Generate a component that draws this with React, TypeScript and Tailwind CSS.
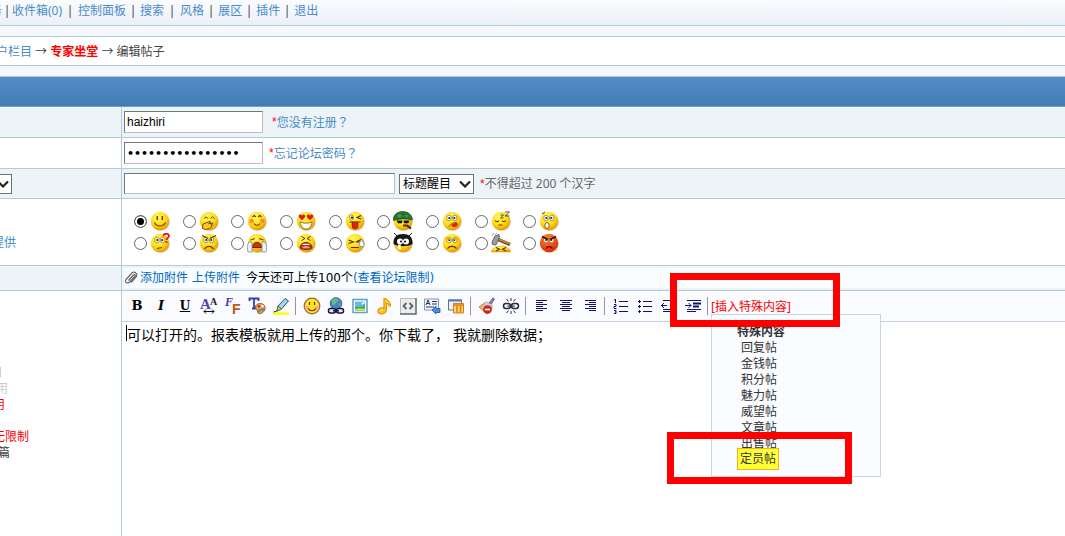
import type { ReactNode } from "react";

const navLinks = [
  { label: "收件箱(0)", gap: "w-4" },
  { label: "控制面板", gap: "w-3.5" },
  { label: "搜索", gap: "w-4" },
  { label: "风格", gap: "w-3.5" },
  { label: "展区", gap: "w-3.5" },
  { label: "插件", gap: "w-3.5" },
];

const specialPosts = ["回复帖", "金钱帖", "积分帖", "魅力帖", "威望帖", "文章帖", "出售帖"];

const link = "text-[#4a8cc7] hover:underline";

function Row({ left, children, className = "" }: { left?: ReactNode; children: ReactNode; className?: string }) {
  return (
    <div className={`flex border-b border-[#b3cad9] ${className}`}>
      <div className="w-[122px] shrink-0 border-r border-[#b3cad9] flex items-center">{left}</div>
      <div className="flex-1 flex items-center pl-0.5">{children}</div>
    </div>
  );
}

function Clipped({ className, children }: { className: string; children: ReactNode }) {
  return <div className={`flex justify-end overflow-hidden whitespace-nowrap ${className}`}>{children}</div>;
}

function Star({ className }: { className: string }) {
  return <span className={`text-[#f00] font-['Liberation_Sans',sans-serif] ${className}`}>*</span>;
}

function Chevron() {
  return (
    <svg className="absolute right-[3px] top-1.5 pointer-events-none" width="12" height="8" viewBox="0 0 12 8">
      <path d="M1 1.5 6 6.5 11 1.5" fill="none" stroke="#222" strokeWidth="2.2" />
    </svg>
  );
}

const inputBox =
  "border border-t-[#707780] border-l-[#707780] border-r-[#b7bec4] border-b-[#b7bec4] bg-white text-black px-0.5 outline-none";

/* ---------- smileys ---------- */

const eyes = (
  <g fill="none" stroke="#5a3200" strokeWidth="1.3">
    <path d="M7.3 5v4M12.3 5v4" />
  </g>
);

const bigEyes = (
  <g>
    <ellipse cx="7" cy="7" rx="2.3" ry="2.8" fill="#fff" stroke="#7a5200" strokeWidth=".6" />
    <ellipse cx="12.7" cy="7" rx="2.3" ry="2.8" fill="#fff" stroke="#7a5200" strokeWidth=".6" />
    <circle cx="7.3" cy="7" r="1.1" fill="#222" />
    <circle cx="12.3" cy="7" r="1.1" fill="#222" />
  </g>
);

const heart = "M0-1.2C-1-3.2-3.6-2.6-3.2-.4-3 1-1 2.2 0 3.2 1 2.2 3 1 3.2-.4 3.6-2.6 1-3.2 0-1.2Z";

const faces: { name: string; art: ReactNode; fill?: string }[] = [
  {
    name: "微笑",
    art: (
      <>
        {eyes}
        <path d="M4.5 11.5c2 4.6 8.6 4.6 11 0" fill="none" stroke="#7a4a00" strokeWidth="1.2" />
      </>
    ),
  },
  {
    name: "偷笑",
    art: (
      <>
        <path d="M5 7.5 7 5.8l2 1.7M11.5 7.5l2-1.7 2 1.7" fill="none" stroke="#6b4100" />
        <path d="M3.5 17.5 4 13l4-1.5 3-1.2.6 1.2-2 1.2 4-.7v1.2l-1.6.7 1 1-2.6 2.6-4 1Z" fill="#ffc928" stroke="#6b3c00" strokeWidth=".9" />
      </>
    ),
  },
  {
    name: "害羞",
    art: (
      <>
        <circle cx="4.7" cy="10" r="2.2" fill="#ff7a38" opacity=".85" />
        <circle cx="15.3" cy="10" r="2.2" fill="#ff7a38" opacity=".85" />
        <path d="M5.5 6 7.2 4.5 9 6M11 6l1.8-1.5L14.5 6M7 12.5c1.5 2.4 4.5 2.4 6 0" fill="none" stroke="#6b3c00" strokeWidth="1.1" />
      </>
    ),
  },
  {
    name: "色",
    art: (
      <>
        <path d={heart} transform="translate(6 6)" fill="#e8160c" />
        <path d={heart} transform="translate(14 6)" fill="#e8160c" />
        <path d="M4 11c3 1.6 9 1.6 12 0-.6 5-3 7-5.5 7C7.5 18 4.5 15.5 4 11Z" fill="#fff" stroke="#8b5200" strokeWidth=".8" />
      </>
    ),
  },
  {
    name: "调皮",
    art: (
      <>
        <ellipse cx="6.5" cy="6.5" rx="2" ry="2.6" fill="#fff" stroke="#7a5200" strokeWidth=".6" />
        <circle cx="7" cy="6.6" r="1.2" fill="#222" />
        <path d="m16 4.5-4 2 4 1.6M4.5 11h11" fill="none" stroke="#5a3200" strokeWidth="1.1" />
        <path d="M7 11.3h6v3.500a3 3 0 0 1-6 0Z" fill="#e02010" stroke="#8a1500" strokeWidth=".7" />
      </>
    ),
  },
  {
    name: "大兵",
    art: (
      <>
        <path d="M.5 9.5C0 4 4 .5 9.5.5c6 0 9.5 3.5 10 8.5-5-1.5-13-1.5-19 .5Z" fill="#247530" stroke="#104818" strokeWidth=".7" />
        <path d="M4 4.5 7 3l2 2-3 2ZM12 3.5l4 1.5-3 1.5Z" fill="#4f9e50" />
        <path d="M3.5 9.500h6l-.6 2.700H5Zm7 0h6l-1.200 2.700H11Z" fill="#111" />
        <path d="M10 14.500h4l4 3" fill="none" stroke="#583010" strokeWidth="2.2" />
      </>
    ),
  },
  {
    name: "馋",
    art: (
      <>
        {bigEyes}
        <path d="M7 15.500c2-3 5-4.500 8-3.500" stroke="#733900" fill="none" />
        <path d="M9.500 13.500c2 0 4-2.500 5.500-1.500 2 2-.5 4.500-3 4-2 0-3-1-2.500-2.500Z" fill="#e6200e" />
      </>
    ),
  },
  {
    name: "睡",
    art: (
      <>
        <path d="M4 9.500c1 1.500 3 1.500 4 0M11 9.500c1 1.500 3 1.500 4 0M7.500 14h4" fill="none" stroke="#6b3c00" strokeWidth="1.1" />
        <path d="M9.500 4h3l-3 3h3M14 1h4.500L14 5h4.500" fill="none" stroke="#444" strokeWidth=".9" />
      </>
    ),
  },
  {
    name: "惊讶",
    art: (
      <>
        {bigEyes}
        <ellipse cx="8" cy="14.5" rx="2.2" ry="3" fill="#fff" stroke="#7a4a00" strokeWidth=".9" />
        <path d="m3 3 3-2" stroke="#333" />
      </>
    ),
  },
  {
    name: "疑问",
    art: (
      <>
        {bigEyes}
        <path d="m7 15.500 5-1" stroke="#6b3c00" strokeWidth="1.2" />
        <path d="M13.500 3c0-3 5.500-3 5.500 0 0 1.800-2.500 2-2.500 4M16.500 8v2" fill="none" stroke="#f0141e" strokeWidth="1.8" />
      </>
    ),
  },
  {
    name: "生气",
    art: (
      <>
        {bigEyes}
        <path d="m3 2.500 6 3M17 2.500l-6 3M5.500 16c2-3.500 7-3.500 9 0" fill="none" stroke="#6b3c00" strokeWidth="1.3" />
      </>
    ),
  },
  {
    name: "大哭",
    art: (
      <>
        <path d="M3.500 7 8 5.500M16.500 7 12 5.500" stroke="#5a3200" />
        <path d="M5.500 14.500c0-7 9-7 9 0Z" fill="#d92a12" stroke="#6b2200" />
        <path d="M2 9c-2 3-2 6-1 10h4V9ZM18 9c2 3 2 6 1 10h-4V9Z" fill="#e9f4ff" stroke="#7b8ba0" strokeWidth=".8" />
      </>
    ),
  },
  {
    name: "抓狂",
    art: (
      <>
        <path d="m5.500 3.500 3.500 2-3.500 2M14.500 3.500l-3.500 2 3.500 2" fill="none" stroke="#5a3200" />
        <path d="M4 15c0-7.500 12-7.500 12 0-2 2-10 2-12 0Z" fill="#b93318" stroke="#6b2200" strokeWidth=".9" />
        <path d="M7 10.800h6l.8 1.200H6.200Z" fill="#fff" />
        <path d="M6 15.200c1-3 7-3 8 0Z" fill="#f09a86" />
      </>
    ),
  },
  {
    name: "流汗",
    art: (
      <>
        <path d="m3.500 7 5 2-5 1.500M16 6.500 11 9h5M6 14.500h8" fill="none" stroke="#5a3200" strokeWidth="1.1" />
        <path d="M16.500 6.500c-2 3-3 5-1.500 6.500 1 1 3.500 1 4-.5.500-2-1-4-2.500-6Z" fill="#f2f8ff" stroke="#66829c" strokeWidth=".8" />
      </>
    ),
  },
  {
    name: "委屈",
    art: (
      <>
        <path d="M.5 11C0 4 4 1 10 1s10 3 9.500 10c-5 3-14 3-19 0Z" fill="#171717" />
        <path d="m1 0 3 3M19 0l-3 3" stroke="#222" />
        <circle cx="7" cy="8.5" r="3" fill="#fff" />
        <circle cx="13" cy="8.5" r="3" fill="#fff" />
        <circle cx="8" cy="8.5" r="1" />
        <circle cx="12" cy="8.5" r="1" />
        <path d="M6.500 11.500v5" stroke="#fff" strokeWidth="2.5" />
      </>
    ),
  },
  {
    name: "难过",
    art: (
      <>
        {bigEyes}
        <path d="M3.500 5.500h5M11.500 5.500h5" stroke="#edb000" strokeWidth="2" />
        <path d="M5.500 15.500c2-3 7-3 9 0" fill="none" stroke="#6b3c00" strokeWidth="1.3" />
      </>
    ),
  },
  { name: "敲打", art: null },
  {
    name: "发怒",
    fill: "url(#rage)",
    art: (
      <>
        {bigEyes}
        <path d="m3 3.500 6 3M17 3.500l-6 3M7 15.500c1.500-2.500 5-2.500 6.500 0" fill="none" stroke="#3c0c00" strokeWidth="1.4" />
      </>
    ),
  },
];

function Smiley({ index }: { index: number }) {
  const face = faces[index];
  if (face.art === null) {
    return (
      <svg width="20" height="20" viewBox="0 0 20 20">
        <path d="M.5 19c1-8 18-8 19 0Z" fill="url(#smile)" stroke="#d79400" strokeWidth=".5" />
        <path d="m5 14.500 3.500 1.800L5 18M15 14.500l-3.500 1.800L15 18" fill="none" stroke="#5a3200" strokeWidth="1.2" />
        <path d="m6 6 13 5.500" stroke="#6b3510" strokeWidth="3.4" />
        <path d="m6 5.700 13 5.300" stroke="#c98340" strokeWidth="1.8" />
        <path d="M1 9 4 3l4-1.500.5 3L5 12l-3.500-.5Z" fill="#9a9da0" stroke="#4d5053" strokeWidth=".8" />
        <path d="m1 3 2-3M4 2 6 0" stroke="#888" strokeWidth=".8" />
      </svg>
    );
  }
  return (
    <svg width="20" height="20" viewBox="0 0 20 20">
      <ellipse cx="10.6" cy="10.8" rx="9.2" ry="9" fill="#b89d78" opacity=".6" />
      <circle cx="10" cy="10" r="9.2" fill={face.fill ?? "url(#smile)"} />
      {face.art}
    </svg>
  );
}

/* ---------- toolbar icons ---------- */

const navy = "#11116b";

function Icon({ children }: { children: ReactNode }) {
  return (
    <svg width="18" height="18" viewBox="0 0 18 18" fill="none">
      {children}
    </svg>
  );
}

const serif = "font-['Liberation_Serif',serif] font-bold";

const tools: { name: string; icon: ReactNode }[][] = [
  [
    { name: "粗体", icon: <span className="font-['DejaVu_Serif',serif] font-bold text-[13px] text-black">B</span> },
    { name: "斜体", icon: <span className="font-['DejaVu_Serif',serif] font-bold italic text-[13px] text-black">I</span> },
    { name: "下划线", icon: <span className="font-['DejaVu_Serif',serif] font-bold underline text-xs text-black">U</span> },
    {
      name: "字体大小",
      icon: (
        <Icon>
          <text x="0" y="12" fontSize="15" fill="#5246ad" className={serif}>A</text>
          <text x="10" y="8" fontSize="10" fill="#222" className={serif}>A</text>
          <path d="M4 14.500h10M6 12.500l-2 2 2 2M12 12.500l2 2-2 2" stroke="#111" />
        </Icon>
      ),
    },
    {
      name: "字体",
      icon: (
        <Icon>
          <text x="1" y="9" fontSize="12" fill="#4438a8" className={`${serif} italic`}>F</text>
          <text x="8" y="17" fontSize="14" fill="#bd571b" className="font-['Liberation_Sans',sans-serif] font-bold">F</text>
        </Icon>
      ),
    },
    {
      name: "字体颜色",
      icon: (
        <Icon>
          <path d="M1.500 4V1.500h9V4M6 2v9M4 11.500h4" stroke="#3040a8" strokeWidth="1.8" />
          <path d="M7.500 10c0-4 8-5 9.300-.5C18 14 14 17 11 16.500c-2-.3-1-2.500-2-3.500-.7-.7-1.500-1.500-1.500-3Z" fill="#e8a05c" stroke="#9a5525" />
          <circle cx="11" cy="9.3" r="1.3" fill="#d62222" />
          <circle cx="14.5" cy="9" r="1.2" fill="#fff" />
          <circle cx="14.5" cy="12.5" r="1.3" fill="#2380d8" />
          <circle cx="11.5" cy="13.5" r="1.2" fill="#28a13b" />
        </Icon>
      ),
    },
    {
      name: "背景色",
      icon: (
        <Icon>
          <path d="M1 16.500h16" stroke="#ffff00" strokeWidth="2.5" />
          <path d="M13 1.500 16.500 4 9.500 12 5 14l1-5Z" fill="#9fd5ee" stroke="#2d5278" />
          <path d="m6 9 3.500 3L5 14Z" fill="#e9de3a" stroke="#5c6a38" />
          <path d="m5 14-3.500 1" stroke="#333" />
        </Icon>
      ),
    },
  ],
  [
    {
      name: "表情",
      icon: (
        <Icon>
          <circle cx="9" cy="9" r="7.8" fill="#ffe620" stroke="#a16d38" strokeWidth="1.2" />
          <circle cx="4" cy="10.5" r="2" fill="#ffa49a" />
          <circle cx="14" cy="10.5" r="2" fill="#ffa49a" />
          <path d="M6.500 5v3M11.500 5v3M5 11.500c2 3 6 3 8 0" stroke="#543000" strokeWidth="1.2" />
        </Icon>
      ),
    },
    {
      name: "链接",
      icon: (
        <Icon>
          <circle cx="9" cy="6.5" r="5.8" fill="#4e82c7" stroke="#465b9c" />
          <path d="M5 3c2-2 6-2 7 0-1 2-2 1-3 3s-2 3-4 1ZM12 7l2-1-1 4Z" fill="#5ec278" />
          <rect x="1.5" y="11.5" width="7" height="4.5" rx="2" fill="#e7e7ff" stroke="#15152f" strokeWidth="1.5" />
          <rect x="9.5" y="11.5" width="7" height="4.5" rx="2" fill="#e7e7ff" stroke="#15152f" strokeWidth="1.5" />
          <path d="M6 13.800h6" stroke="#15152f" strokeWidth="1.5" />
        </Icon>
      ),
    },
    {
      name: "图片",
      icon: (
        <Icon>
          <rect x="2" y="2.5" width="14" height="13" fill="#fff" stroke="#639fc4" strokeWidth="1.5" />
          <path d="M4 4.500h10v9H4Z" fill="#62bcf0" />
          <path d="M4 10.500c3-3 5 2 10-3v6H4Z" fill="#4daa45" />
          <path d="M4 12.500c3-2 6 0 10-1v2H4Z" fill="#cde353" />
          <path d="m11 7 3-2" stroke="#fff" strokeWidth="1.5" />
        </Icon>
      ),
    },
    {
      name: "音乐",
      icon: (
        <Icon>
          <path d="M9 11.500V1.500h1.600c.6 2.500 5.400 2.500 4.900 6.500-.4 1.600-1.600 1.600-1.500 0 0-1.300-1.200-1.500-2.600-1.700V13c-.4 4-6 4.800-8 2.500C2 12.500 5 9.800 9 11.500Z" fill="#ffc826" stroke="#ee9100" strokeWidth="1.2" />
          <path d="M5 14c1-1.500 2-1.500 3-1M10.500 3.500c1 1.500 2.500 1.500 3.500 3" stroke="#fff3a0" />
        </Icon>
      ),
    },
    {
      name: "代码",
      icon: (
        <Icon>
          <path d="M1 1h16v16H1Z" fill="#ececec" />
          <path d="M1.500 17V1.500H17" stroke="#b9b9b9" />
          <path d="M17 1v16H1" stroke="#666" strokeWidth="1.5" />
          <path d="M7.500 6 4.500 9l3 3M10.500 6l3 3-3 3" stroke="#586174" strokeWidth="1.8" />
        </Icon>
      ),
    },
    {
      name: "引用",
      icon: (
        <Icon>
          <path d="M1.500 2h14v11h-14Z" fill="#f4f8ff" stroke="#8296b3" />
          <path d="m3 8 2-5 2 5M4 6.500h2M9 4.500h5M9 7h5M3 10h8" stroke="#263552" />
          <path d="m9 13 4-4v2.500h4v4h-4V17Z" fill="#4e8bdb" stroke="#22539b" strokeWidth=".8" />
        </Icon>
      ),
    },
    {
      name: "表格",
      icon: (
        <Icon>
          <path d="M1.500 3h13v10h-13Z" fill="#edf2fa" stroke="#5c6f99" />
          <path d="M1 3.500h14" stroke="#5378b7" strokeWidth="2" />
          <path d="M6.500 6.500h10v9.500h-10Z" fill="#ffd56f" stroke="#dc7b12" />
          <path d="M6.500 8h10M10 8v8M13.500 8v8" stroke="#e07c13" strokeWidth="1.5" />
        </Icon>
      ),
    },
  ],
  [
    {
      name: "清除格式",
      icon: (
        <Icon>
          <path d="m11 6 4-5 1.500 1L13 7.500Z" fill="#8b93c8" stroke="#555b91" />
          <path d="m8 5 6 3c0 5-2 7-5 9L1 10Z" fill="#e9ba87" stroke="#b68055" />
          <path d="m8 5 6 3-1 2-7-3Z" fill="#c9d0e7" />
          <circle cx="9.5" cy="12.5" r="4.3" fill="#c52b20" />
          <path d="M7 12.500h5" stroke="#fff" strokeWidth="1.6" />
        </Icon>
      ),
    },
    {
      name: "取消链接",
      icon: (
        <Icon>
          <rect x="1.5" y="6.5" width="7" height="5" rx="2.5" stroke="#292940" strokeWidth="1.5" />
          <rect x="9.5" y="6.5" width="7" height="5" rx="2.5" stroke="#292940" strokeWidth="1.5" />
          <path d="M5 9h8M9 1v3M9 14v3M4.500 2l2 2.500M13.500 2l-2 2.500M4.500 16l2-2.500M13.500 16l-2-2.500" stroke="#292940" />
        </Icon>
      ),
    },
  ],
  [
    { name: "左对齐", icon: <Icon><path d="M3 3.500h11M3 5.500h7M3 7.500h11M3 9.500h7M3 11.500h11M3 13.500h7" stroke={navy} /></Icon> },
    { name: "居中", icon: <Icon><path d="M3 3.500h12M5 5.500h8M3 7.500h12M5 9.500h8M3 11.500h12M5 13.500h8" stroke={navy} /></Icon> },
    { name: "右对齐", icon: <Icon><path d="M4 3.500h11M8 5.500h7M4 7.500h11M8 9.500h7M4 11.500h11M8 13.500h7" stroke={navy} /></Icon> },
  ],
  [
    { name: "编号", icon: <Icon><path d="M7 4.500h9M7 9.500h9M7 14.500h9" stroke={navy} /><path d="M2 3.500 3.500 2v4M2 7.500h2v2H2v2h2.500M2 13.500h2v3H2M3 15h1" stroke={navy} /></Icon> },
    { name: "列表", icon: <Icon><path d="M7 4.500h9M7 9.500h9M7 14.500h9M2 4.500h3M2 9.500h3M2 14.500h3M3.500 3v3M3.500 8v3M3.500 13v3" stroke={navy} /></Icon> },
    {
      name: "减少缩进",
      icon: (
        <Icon>
          <path d="M3 3.500h14M3 12.500h14M3 14.500h9M1 8.500h6M4 6 1.500 8.500 4 11" stroke={navy} />
          <path d="M10 6.500h7M10 9.500h4" stroke={navy} strokeWidth="2" />
        </Icon>
      ),
    },
    {
      name: "增加缩进",
      icon: (
        <Icon>
          <path d="M3 3.500h14M3 12.500h14M3 14.500h9M1 8.500h6M4.500 6 7 8.500 4.500 11" stroke={navy} />
          <path d="M9 6.500h8M9 9.500h6" stroke={navy} strokeWidth="2" />
        </Icon>
      ),
    },
  ],
];

function Separator() {
  return <div className="ml-0.5 mr-1 w-px h-[18px] bg-[#93979d]" />;
}

function Toolbar() {
  return (
    <div className="flex items-center h-[31px] pl-[3px] bg-[#f9fbfe] border-b border-[#c3d3e3]">
      {tools.map((group, i) => (
        <div key={i} className="flex items-center">
          {group.map((tool) => (
            <button key={tool.name} aria-label={tool.name} className="size-6 flex items-center justify-center">
              {tool.icon}
            </button>
          ))}
          {i < tools.length - 1 && <Separator />}
        </div>
      ))}
      <Separator />
      <div className="relative -ml-px pt-0.5">
        <button className="block text-[#f00] leading-4 whitespace-nowrap">[插入特殊内容]</button>
        <SpecialMenu />
      </div>
    </div>
  );
}

function SpecialMenu() {
  return (
    <div className="absolute top-[17px] left-0 z-10 w-[170px] border border-[#c9d7e5] bg-[#fafcff] pt-[9px] pb-1.5 pl-[25px] leading-4 text-[#333]">
      <div className="font-bold">特殊内容</div>
      {specialPosts.map((name) => (
        <button key={name} className="block ml-1">
          {name}
        </button>
      ))}
      <button className="relative block -mt-1 px-0.5 py-0.5 border border-[#f5b022] bg-[#ffff33]">定员帖</button>
    </div>
  );
}

export default function App() {
  return (
    <div className="relative min-h-screen flex flex-col overflow-hidden bg-[#f4f8fc] text-xs text-[#444] font-['Noto_Sans','Noto_Sans_CJK_SC',sans-serif]">
      <svg className="absolute size-0">
        <defs>
          <radialGradient id="smile" cx="40%" cy="30%" r="70%">
            <stop offset="0" stopColor="#fff96a" />
            <stop offset=".6" stopColor="#ffdc18" />
            <stop offset="1" stopColor="#e89c00" />
          </radialGradient>
          <radialGradient id="rage" cx="40%" cy="25%" r="75%">
            <stop offset="0" stopColor="#ff8a30" />
            <stop offset="1" stopColor="#e02a08" />
          </radialGradient>
        </defs>
      </svg>

      <nav className="flex items-center h-[26px] pb-1 border-b border-[#b3cad9] bg-linear-to-b from-[#fafcfe] to-[#eaf0f8] whitespace-nowrap">
        <Clipped className="w-0.5">
          <a href="#" className={link}>务</a>
        </Clipped>
        <span className="w-2.5 text-center">|</span>
        {navLinks.map((item) => (
          <div key={item.label} className="flex">
            <a href="#" className={link}>{item.label}</a>
            <span className={`text-center ${item.gap}`}>|</span>
          </div>
        ))}
        <a href="#" className={link}>退出</a>
      </nav>

      <div className="flex items-center mt-2.5 pt-0.5 h-[30px] border-y border-[#b3cad9] bg-white whitespace-pre">
        <Clipped className="w-8">
          <a href="#" className={link}>户栏目</a>
        </Clipped>
        <span> → </span>
        <a href="#" className="font-bold text-[#f00]">专家坐堂</a>
        <span> → 编辑帖子</span>
      </div>

      <form className="mt-2.5 flex-1 flex flex-col" onSubmit={(e) => e.preventDefault()}>
        <div className="h-[31px] border-t border-t-[#b3cad9] border-b border-b-[#6f9fcc] bg-linear-to-b from-[#548ec7] to-[#417db5]" />

        <Row className="h-[31px] bg-[#ecf4f8]">
          <input aria-label="用户名" defaultValue="haizhiri" className={`${inputBox} w-[139px] h-[22px] font-['Liberation_Sans',sans-serif]`} />
          <Star className="ml-[9px]" />
          <a href="#" lang="zh-TW" className={link}>您没有注册<span className="font-['Noto_Sans_CJK_TC',sans-serif]">？</span></a>
        </Row>

        <Row className="h-[31px] bg-white">
          <input aria-label="密码" type="password" defaultValue="1234567890123456" className={`${inputBox} w-[139px] h-[22px] text-[11px] font-bold font-['DejaVu_Sans',sans-serif]`} />
          <Star className="ml-1.5" />
          <a href="#" className={link}>忘记论坛密码<span className="font-['Noto_Sans_CJK_TC',sans-serif]">？</span></a>
        </Row>

        <Row
          className="h-[30px] bg-[#ecf4f8]"
          left={
            <Clipped className="w-3">
              <div className="relative shrink-0">
                <select aria-label="话题" className="block appearance-none w-10 h-5 border border-[#707070] bg-white" />
                <Chevron />
              </div>
            </Clipped>
          }
        >
          <input aria-label="标题" className={`${inputBox} w-[271px] h-[21px]`} />
          <div className="relative ml-1">
            <select aria-label="标题样式" className="block appearance-none w-[75px] h-5 pl-[3px] border border-[#707070] bg-white text-black leading-4">
              <option>标题醒目</option>
            </select>
            <Chevron />
          </div>
          <Star className="ml-1.5" />
          <span className="text-[#666]">不得超过 200 个汉字</span>
        </Row>

        <Row
          className="h-[67px] bg-white"
          left={
            <Clipped className="w-4 pt-[22px]">
              <a href="#" className={link}>提供</a>
            </Clipped>
          }
        >
          <div className="grid grid-cols-9 w-[438px] ml-2.5">
            {faces.map((face, i) => (
              <label key={face.name} className="flex items-center gap-[3px] h-[22px]">
                <input
                  type="radio"
                  name="face"
                  aria-label={face.name}
                  defaultChecked={i === 0}
                  className="appearance-none size-[13px] rounded-full border border-[#666] bg-white checked:bg-black checked:shadow-[inset_0_0_0_2px_#fff]"
                />
                <Smiley index={i} />
              </label>
            ))}
          </div>
        </Row>

        <Row className="h-[25px] bg-[#ecf4f8]">
          <div className="flex-1 flex items-center h-5 bg-[#f9fdff] text-black whitespace-nowrap">
            <svg width="14" height="14" viewBox="0 0 14 14" fill="none" stroke="#666" strokeWidth="1.2">
              <path d="m4.500 9.500 5-5.500c1-1 2.500 0 1.500 1.200L5.500 11c-2 2-5.500 0-3.500-2.500L7.500 2.500c3-3 7 .5 4.500 3.500l-5 5.500" />
            </svg>
            <a href="#" className="ml-0.5 text-[#0068c0]">添加附件</a>
            <a href="#" className="ml-1 text-[#0068c0]">上传附件</a>
            <span className="ml-1.5 font-['DejaVu_Sans','Noto_Sans_CJK_SC',sans-serif]">今天还可上传100个</span>
            <a href="#" className="text-[#0068c0] font-['DejaVu_Sans','Noto_Sans_CJK_SC',sans-serif]">(查看论坛限制)</a>
          </div>
        </Row>

        <div className="flex-1 flex bg-white">
          <div className="w-[122px] shrink-0 border-r border-[#b3cad9] pt-[74px] leading-4">
            <Clipped className="w-0.5 text-[#bbb]">用</Clipped>
            <Clipped className="w-2 text-[#ccc]">用</Clipped>
            <Clipped className="w-[5px] text-[#f00]">用</Clipped>
            <Clipped className="w-[29px] mt-4 text-[#f00]">无限制</Clipped>
            <Clipped className="w-2.5">篇</Clipped>
          </div>
          <div className="flex-1 flex flex-col">
            <Toolbar />
            <div className="flex-1 flex pl-1 pt-[3px]">
              <div className="w-px h-4 bg-black" />
              <textarea
                aria-label="内容"
                defaultValue="可以打开的。报表模板就用上传的那个。你下载了， 我就删除数据；"
                className="flex-1 resize-none outline-none text-sm leading-5 text-black font-['Liberation_Sans','Noto_Sans_CJK_SC',sans-serif]"
              />
            </div>
          </div>
        </div>
      </form>

      <div className="absolute z-20 left-[670px] top-[273px] w-[170px] h-[54px] border-[7px] border-[#f00] pointer-events-none" />
      <div className="absolute z-20 left-[667px] top-[432px] w-[185px] h-[52px] border-[7px] border-[#f00] pointer-events-none" />
    </div>
  );
}
